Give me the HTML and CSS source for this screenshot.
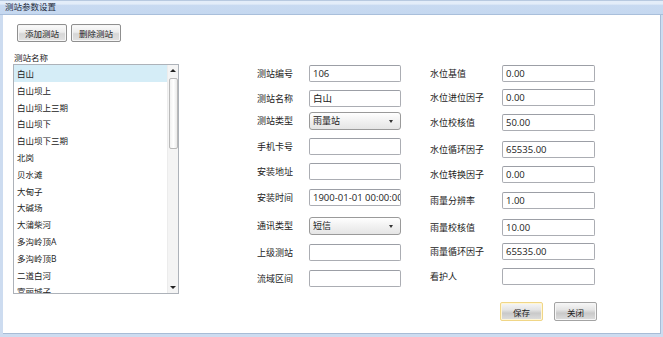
FILE: index.html
```html
<!DOCTYPE html>
<html lang="zh-cn">
<head>
    <meta charset="UTF-8">
    <title>测站参数设置</title>
    <link rel="stylesheet" href="styles.css">
</head>
<body>
    <div class="window">
        <div class="titlebar">测站参数设置</div>
        <div class="client">
            <div class="toolbar">
                <button class="btn">添加测站</button>
                <button class="btn">删除测站</button>
            </div>

            <div class="main">
                <!-- 测站列表 -->
                <div class="station-panel">
                    <div class="panel-label">测站名称</div>
                    <div class="listbox">
                        <ul class="list-items">
                            <li class="selected">白山</li>
                            <li>白山坝上</li>
                            <li>白山坝上三期</li>
                            <li>白山坝下</li>
                            <li>白山坝下三期</li>
                            <li>北岗</li>
                            <li>贝水滩</li>
                            <li>大甸子</li>
                            <li>大碱场</li>
                            <li>大蒲柴河</li>
                            <li>多沟岭顶A</li>
                            <li>多沟岭顶B</li>
                            <li>二道白河</li>
                            <li>富丽城子</li>
                        </ul>
                        <div class="scrollbar">
                            <span class="arrow up"></span>
                            <span class="thumb"></span>
                            <span class="track"></span>
                            <span class="arrow down"></span>
                        </div>
                    </div>
                </div>

                <!-- 基本信息 -->
                <div class="form-col col-mid">
                    <label>测站编号</label><div class="field">106</div>
                    <label>测站名称</label><div class="field">白山</div>
                    <label>测站类型</label><div class="field select">雨量站<span class="caret"></span></div>
                    <label>手机卡号</label><div class="field"></div>
                    <label>安装地址</label><div class="field"></div>
                    <label>安装时间</label><div class="field">1900-01-01 00:00:00</div>
                    <label>通讯类型</label><div class="field select">短信<span class="caret"></span></div>
                    <label>上级测站</label><div class="field"></div>
                    <label>流域区间</label><div class="field"></div>
                </div>

                <!-- 参数 -->
                <div class="right-area">
                    <div class="form-col col-right">
                        <label>水位基值</label><div class="field">0.00</div>
                        <label>水位进位因子</label><div class="field">0.00</div>
                        <label>水位校核值</label><div class="field">50.00</div>
                        <label>水位循环因子</label><div class="field">65535.00</div>
                        <label>水位转换因子</label><div class="field">0.00</div>
                        <label>雨量分辨率</label><div class="field">1.00</div>
                        <label>雨量校核值</label><div class="field">10.00</div>
                        <label>雨量循环因子</label><div class="field">65535.00</div>
                        <label>看护人</label><div class="field"></div>
                    </div>
                    <div class="footer">
                        <button class="btn btn-footer default">保存</button>
                        <button class="btn btn-footer">关闭</button>
                    </div>
                </div>
            </div>
        </div>
    </div>
</body>
</html>
```

FILE: styles.css
```css
* {
    box-sizing: border-box;
}

body {
    margin: 0;
    background: #ffffff;
    font-family: "Open Sans", "Noto Sans CJK SC", sans-serif;
    color: #222;
}

.window {
    width: 663px;
    height: 337px;
    background: #cddcf0;
    border-left: 3px solid #cddcf0;
    display: flex;
    flex-direction: column;
}

.titlebar {
    height: 15px;
    margin-left: -3px;
    padding-left: 5px;
    background: linear-gradient(#e3edf9 0%, #e3edf9 25%, #c8daf1 30%, #c5d8f0 100%);
    border-top: 1px solid #b7c9e0;
    border-bottom: 1px solid #a9bfdb;
    font-size: 8.5px;
    line-height: 12px;
    color: #1d2b3d;
}

.client {
    flex: 1;
    margin: 0 2px 3px 0;
    background: #ffffff;
    border-right: 1px solid #a8bcd6;
    border-bottom: 1px solid #a8bcd6;
}

.toolbar {
    display: flex;
    gap: 4px;
    padding: 9px 0 0 14px;
}

.btn {
    height: 18px;
    width: 50px;
    padding: 0;
    font-family: "Noto Sans CJK SC", sans-serif;
    font-size: 8.5px;
    line-height: 14px;
    color: #222;
    background: linear-gradient(#fbfbfb 0%, #ececec 45%, #d6d6d6 55%, #e2e2e2 100%);
    border: 1px solid #8f8f8f;
    border-radius: 2px;
    box-shadow: inset 0 0 0 1px #f6f6f6;
}

.main {
    display: flex;
    padding-left: 10px;
}

.station-panel {
    width: 166px;
    padding-top: 9px;
}

.panel-label {
    height: 13px;
    padding-left: 1px;
    font-size: 8.5px;
    line-height: 13px;
}

.listbox {
    display: flex;
    height: 230px;
    border: 1px solid #adb2b9;
    background: #ffffff;
}

.list-items {
    flex: 1;
    margin: 0;
    padding: 0;
    list-style: none;
    overflow: hidden;
}

.list-items li {
    height: 16.8px;
    padding-left: 3px;
    font-size: 8.5px;
    line-height: 17px;
    white-space: nowrap;
}

.list-items li.selected {
    background: #d5edf7;
}

.scrollbar {
    width: 11px;
    display: flex;
    flex-direction: column;
    align-items: center;
    background: #f4f4f4;
    border-left: 1px solid #ececec;
}

.scrollbar .arrow {
    height: 11px;
    width: 100%;
    position: relative;
}

.scrollbar .arrow::after {
    content: "";
    position: absolute;
    left: 2px;
    top: 4px;
    border-left: 3px solid transparent;
    border-right: 3px solid transparent;
}

.scrollbar .arrow.up::after {
    border-bottom: 3px solid #222;
}

.scrollbar .arrow.down::after {
    border-top: 3px solid #222;
}

.scrollbar .thumb {
    width: 9px;
    height: 71px;
    margin-top: 2px;
    border: 1px solid #b9b9b9;
    border-radius: 2px;
    background: linear-gradient(90deg, #f2f2f2, #ffffff 50%, #e9e9e9);
}

.scrollbar .track {
    flex: 1;
}

.form-col {
    display: grid;
    align-items: start;
    padding-top: 23px;
}

.form-col label {
    font-size: 9px;
    line-height: 17px;
    white-space: nowrap;
}

.col-mid {
    margin-left: 78px;
    grid-template-columns: 52px 92px;
    grid-template-rows: 25px 22px 26px 25px 26px 28px 27px 26px 17px;
}

.right-area {
    margin-left: 29px;
}

.col-right {
    grid-template-columns: 72px 93px;
    grid-template-rows: 24px 25px 27px 25px 26px 27px 24px 25px 17px;
}

.field {
    height: 17px;
    padding-left: 3px;
    border: 1px solid #abadb3;
    border-top-color: #9c9fa6;
    border-radius: 2px;
    background: #ffffff;
    font-size: 9.5px;
    line-height: 15px;
    white-space: nowrap;
    overflow: hidden;
}

.field.select {
    position: relative;
    height: 18px;
    border-color: #9a9a9a;
    border-radius: 3px;
    background: linear-gradient(#ffffff, #f1f1f1 50%, #e5e5e5);
    font-size: 9px;
    line-height: 16px;
}

.caret {
    position: absolute;
    right: 7px;
    top: 7px;
    border-left: 2.5px solid transparent;
    border-right: 2.5px solid transparent;
    border-top: 3px solid #333;
}

.footer {
    display: flex;
    gap: 11px;
    margin-top: 17px;
    padding-left: 70px;
}

.btn-footer {
    width: 43px;
    height: 19px;
    background: linear-gradient(#f7f7f7 0%, #e4e4e4 40%, #c9c9c9 60%, #dedede 100%);
    border-color: #a3a3a3;
}

.btn-footer.default {
    border-color: #f0d687;
    box-shadow: inset 0 0 0 1px #fff6d6;
}
```
